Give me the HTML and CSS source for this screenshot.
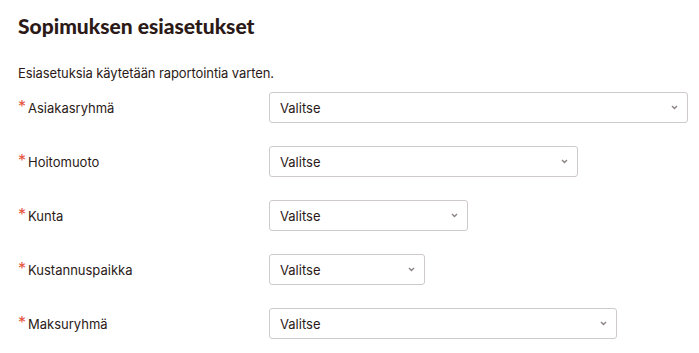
FILE: index.html
```html
<!DOCTYPE html>
<html lang="fi">
<head>
<meta charset="UTF-8">
<title>Sopimuksen esiasetukset</title>
<link rel="stylesheet" href="styles.css">
</head>
<body>
<div class="page">
<h2>Sopimuksen esiasetukset</h2>
<p class="intro">Esiasetuksia käytetään raportointia varten.</p>

<div class="form">
<div class="row">
<label><span class="req">*</span>Asiakasryhmä</label>
<div class="select w-419"><span>Valitse</span><svg width="7" height="5" viewBox="0 0 7 5"><path d="M1 1l2.5 2.5L6 1" fill="none" stroke="#8a8280" stroke-width="1.4"/></svg></div>
</div>
<div class="row">
<label><span class="req">*</span>Hoitomuoto</label>
<div class="select w-309"><span>Valitse</span><svg width="7" height="5" viewBox="0 0 7 5"><path d="M1 1l2.5 2.5L6 1" fill="none" stroke="#8a8280" stroke-width="1.4"/></svg></div>
</div>
<div class="row">
<label><span class="req">*</span>Kunta</label>
<div class="select w-199"><span>Valitse</span><svg width="7" height="5" viewBox="0 0 7 5"><path d="M1 1l2.5 2.5L6 1" fill="none" stroke="#8a8280" stroke-width="1.4"/></svg></div>
</div>
<div class="row">
<label><span class="req">*</span>Kustannuspaikka</label>
<div class="select w-156"><span>Valitse</span><svg width="7" height="5" viewBox="0 0 7 5"><path d="M1 1l2.5 2.5L6 1" fill="none" stroke="#8a8280" stroke-width="1.4"/></svg></div>
</div>
<div class="row">
<label><span class="req">*</span>Maksuryhmä</label>
<div class="select w-348"><span>Valitse</span><svg width="7" height="5" viewBox="0 0 7 5"><path d="M1 1l2.5 2.5L6 1" fill="none" stroke="#8a8280" stroke-width="1.4"/></svg></div>
</div>
</div>
</div>
</body>
</html>
```

FILE: styles.css
```css
body {
margin: 0;
font-family: 'Inter', sans-serif;
color: #2b1a17;
background: #fff;
}
.page {
padding: 14px 0 0 18px;
}
h2 {
margin: 0;
font-family: 'Lato', sans-serif;
font-size: 21px;
font-weight: 900;
line-height: 24px;
}
.intro {
margin: 26px 0 0 0;
font-size: 13px;
line-height: 18px;
letter-spacing: -0.1px;
}
.form {
margin-top: 10px;
}
.row {
display: flex;
align-items: center;
margin-bottom: 23px;
}
.row label {
flex: none;
width: 251px;
font-size: 13px;
line-height: 18px;
display: flex;
align-items: flex-start;
}
.req {
color: #e5533d;
font-size: 16px;
line-height: 14px;
width: 10px;
}
.select {
flex: none;
box-sizing: border-box;
height: 31px;
border: 1px solid #cfcaca;
border-radius: 3px;
display: flex;
align-items: center;
justify-content: space-between;
padding: 0 9px 0 10px;
font-size: 13px;
}
.w-419 { width: 419px; }
.w-309 { width: 309px; }
.w-199 { width: 199px; }
.w-156 { width: 156px; }
.w-348 { width: 348px; }
```
